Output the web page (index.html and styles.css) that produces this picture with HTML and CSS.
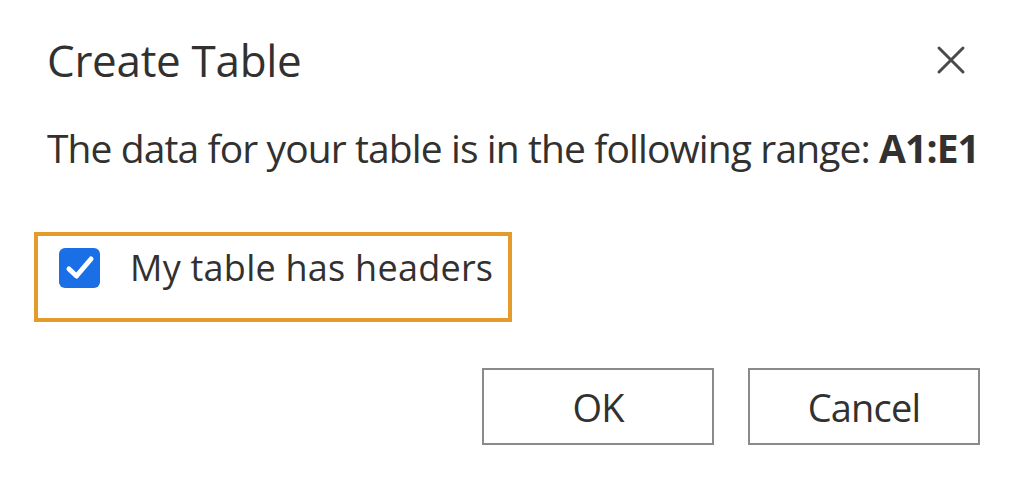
FILE: index.html
```html
<!DOCTYPE html>
<html>
<head>
<meta charset="utf-8">
<link rel="stylesheet" href="styles.css">
</head>
<body>
<div class="dialog">
  <div class="header">
    <h1 class="title">Create Table</h1>
    <button class="close" aria-label="Close">
      <svg width="30" height="30" viewBox="0 0 30 30"><path d="M3 3 L27 27 M27 3 L3 27" stroke="#4a4a4a" stroke-width="3" stroke-linecap="round" fill="none"/></svg>
    </button>
  </div>
  <p class="message">The data for your table is in the following range: <b>A1:E1</b></p>
  <div class="option">
    <span class="checkbox">
      <svg width="30" height="26" viewBox="0 0 30 26"><path d="M4 14 L11.5 21 L26 4" stroke="#fff" stroke-width="5" stroke-linecap="round" stroke-linejoin="round" fill="none"/></svg>
    </span>
    <span class="label">My table has headers</span>
  </div>
  <div class="actions">
    <button class="btn">OK</button>
    <button class="btn">Cancel</button>
  </div>
</div>
</body>
</html>
```
FILE: styles.css
```css
html, body {
  margin: 0;
  padding: 0;
  background: #fff;
}
body {
  font-family: "Open Sans", "Noto Sans", sans-serif;
  color: #323130;
}
.dialog {
  width: 1024px;
  height: 487px;
  box-sizing: border-box;
  padding: 32px 44px 0 47px;
}
.header {
  display: flex;
  justify-content: space-between;
  align-items: flex-start;
}
.title {
  margin: 0;
  font-size: 44px;
  letter-spacing: -0.3px;
  font-weight: 400;
  line-height: 56px;
  color: #323130;
}
.close {
  border: 0;
  background: none;
  padding: 0;
  margin: 13px 14px 0 0;
  width: 30px;
  height: 30px;
}
.close svg { display: block; }
.message {
  margin: 35px 0 0 0;
  font-size: 39px;
  letter-spacing: -0.9px;
  line-height: 50px;
  white-space: nowrap;
}
.message b { font-weight: 700; }
.option {
  margin: 59px 0 0 -13px;
  display: inline-flex;
  align-items: flex-start;
  border: 4px solid #e59b2b;
  padding: 12px 15px 30px 21px;
  gap: 30px;
}
.checkbox {
  flex: none;
  width: 41px;
  height: 40px;
  border-radius: 6px;
  background: #1a6fe6;
  display: flex;
  align-items: center;
  justify-content: center;
}
.checkbox svg { display: block; }
.label {
  font-size: 36px;
  letter-spacing: 0.25px;
  line-height: 40px;
  white-space: nowrap;
}
.actions {
  margin-top: 46px;
  display: flex;
  justify-content: flex-end;
  gap: 34px;
}
.btn {
  width: 232px;
  height: 77px;
  border: 2px solid #8a8a8a;
  background: #fff;
  font-family: inherit;
  font-size: 38px;
  letter-spacing: -0.8px;
  color: #323130;
  padding: 0;
}
```
